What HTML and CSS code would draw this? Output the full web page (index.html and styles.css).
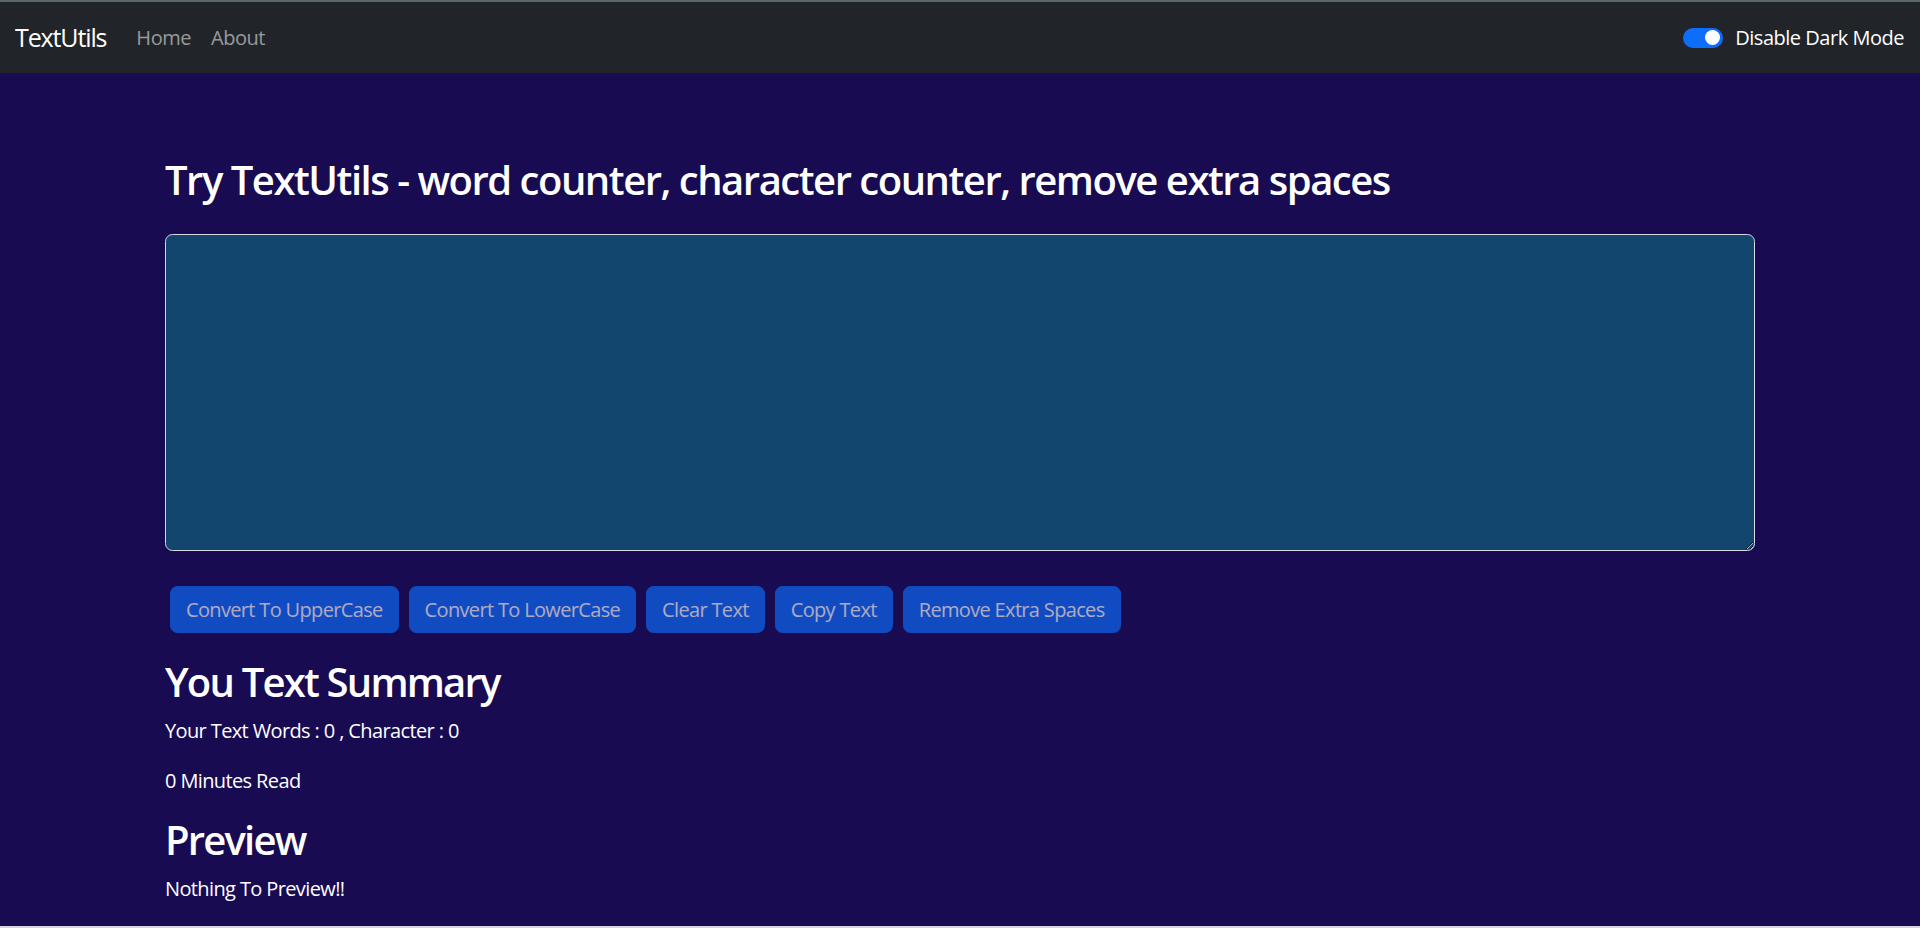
FILE: index.html
```html
<!DOCTYPE html>
<html lang="en">
<head>
<meta charset="utf-8">
<title>TextUtils</title>
<link rel="stylesheet" href="styles.css">
</head>
<body>
<div class="page">
  <nav class="navbar">
    <div class="nav-left">
      <a class="brand" href="#">TextUtils</a>
      <ul class="nav-links">
        <li><a href="#">Home</a></li>
        <li><a href="#">About</a></li>
      </ul>
    </div>
    <div class="switch">
      <span class="toggle"><span class="knob"></span></span>
      <label class="switch-label">Disable Dark Mode</label>
    </div>
  </nav>
  <div class="alert-space"></div>
  <main class="container main">
    <h1 class="title">Try TextUtils - word counter, character counter, remove extra spaces</h1>
    <textarea class="text-input" rows="10"></textarea>
    <div class="btn-row">
      <button class="btn" disabled>Convert To UpperCase</button>
      <button class="btn" disabled>Convert To LowerCase</button>
      <button class="btn" disabled>Clear Text</button>
      <button class="btn" disabled>Copy Text</button>
      <button class="btn" disabled>Remove Extra Spaces</button>
    </div>
  </main>
  <section class="container summary">
    <h2 class="heading">You Text Summary</h2>
    <p class="para">Your Text Words : 0 , Character : 0</p>
    <p class="para">0 Minutes Read</p>
    <h2 class="heading">Preview</h2>
    <p class="para">Nothing To Preview!!</p>
  </section>
</div>
</body>
</html>
```
FILE: styles.css
```css
html, body {
  margin: 0;
  padding: 0;
  background: #d4d4e2;
}
body {
  font-family: "Open Sans", "Noto Sans", sans-serif;
  color: #ffffff;
  letter-spacing: -0.03em;
}
.page {
  background: #180b52;
  min-height: 927px;
  box-sizing: border-box;
  border-bottom: 1px solid #d4d4e2;
}
.navbar {
  display: flex;
  align-items: center;
  justify-content: space-between;
  height: 71px;
  border-top: 2px solid #5b666e;
  background: #212529;
  padding: 0 16px 0 15px;
}
.nav-left {
  display: flex;
  align-items: center;
}
.brand {
  font-size: 25px;
  line-height: 37.5px;
  color: #ffffff;
  text-decoration: none;
  margin-right: 20px;
  letter-spacing: -0.045em;
}
.nav-links {
  display: flex;
  list-style: none;
  margin: 0;
  padding: 0;
}
.nav-links a {
  display: block;
  font-size: 20px;
  line-height: 30px;
  padding: 0 10px;
  color: rgba(255, 255, 255, 0.55);
  text-decoration: none;
}
.switch {
  display: flex;
  align-items: center;
}
.toggle {
  position: relative;
  width: 40px;
  height: 20px;
  box-sizing: border-box;
  border-radius: 10px;
  background: #0d6efd;
  margin-right: 12px;
}
.knob {
  position: absolute;
  right: 3px;
  top: 2.5px;
  width: 15px;
  height: 15px;
  border-radius: 50%;
  background: #ffffff;
}
.switch-label {
  font-size: 20px;
  line-height: 30px;
  color: #ffffff;
}
.alert-space {
  height: 63px;
}
.container {
  width: 1590px;
  margin: 0 auto;
}
.main {
  padding-top: 20px;
}
.title {
  margin: 0 0 30px;
  font-size: 40px;
  line-height: 48px;
  font-weight: 600;
  letter-spacing: -0.037em;
}
.text-input {
  display: block;
  width: 100%;
  height: 317px;
  box-sizing: border-box;
  margin: 0;
  padding: 7.5px 15px;
  background: #13466e;
  color: #ffffff;
  border: 1px solid #d6d8e4;
  border-radius: 7.5px;
  font-family: inherit;
  font-size: 20px;
  line-height: 30px;
  outline: none;
}
.btn-row {
  display: flex;
  gap: 10px;
  margin-top: 35px;
  padding-left: 5px;
}
.btn {
  height: 47px;
  box-sizing: border-box;
  padding: 0 15px;
  border: 1px solid #0d6efd;
  border-radius: 7.5px;
  background: #0d6efd;
  color: #ffffff;
  font-family: inherit;
  font-size: 20px;
  line-height: 30px;
  letter-spacing: -0.033em;
  opacity: 0.65;
}
.summary {
  padding-top: 25px;
}
.heading {
  margin: 0 0 10px;
  font-size: 40px;
  line-height: 48px;
  font-weight: 600;
  letter-spacing: -0.045em;
}
.para {
  margin: 0 0 20px;
  font-size: 20px;
  line-height: 30px;
  letter-spacing: -0.031em;
}
```
